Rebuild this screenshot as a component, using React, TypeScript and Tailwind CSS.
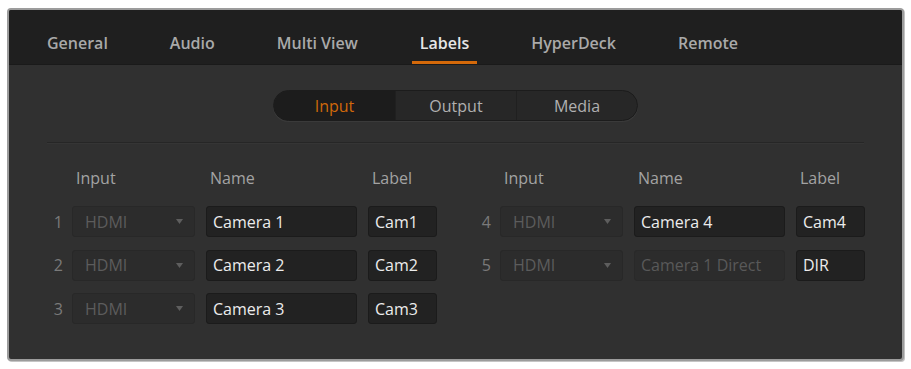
import { useState } from "react";

const tabs = ["General", "Audio", "Multi View", "Labels", "HyperDeck", "Remote"];
const segments = ["Input", "Output", "Media"];

type Row = { n: number; name: string; label: string; fixed?: boolean };

const left: Row[] = [
  { n: 1, name: "Camera 1", label: "Cam1" },
  { n: 2, name: "Camera 2", label: "Cam2" },
  { n: 3, name: "Camera 3", label: "Cam3" },
];

const right: Row[] = [
  { n: 4, name: "Camera 4", label: "Cam4" },
  { n: 5, name: "Camera 1 Direct", label: "DIR", fixed: true },
];

function Caret() {
  return (
    <svg width="7" height="5" viewBox="0 0 7 5" aria-hidden>
      <path d="M0 0h7L3.5 5z" fill="#5e5e5e" />
    </svg>
  );
}

function InputRow({ row }: { row: Row }) {
  return (
    <div className="flex h-[31px] items-center">
      <span className="w-[15px] text-right text-[16px] text-[#7a7a7a]">{row.n}</span>
      <div className="ml-[9px] flex h-full w-[123px] items-center justify-between rounded-[3px] border border-[#282828] bg-[#2c2c2c] pl-[12px] pr-[11px]">
        <span className="text-[16px] text-[#5c5c5c]">HDMI</span>
        <Caret />
      </div>
      <div
        className={`ml-[11px] flex h-full w-[151px] items-center rounded-[3px] border pl-[6px] text-[16px] ${
          row.fixed
            ? "border-[#292929] bg-[#2c2c2c] text-[#595959]"
            : "border-[#1b1b1b] bg-[#222222] text-[#ececec]"
        }`}
      >
        {row.name}
      </div>
      <div className="ml-[11px] flex h-full w-[69px] items-center rounded-[3px] border border-[#1b1b1b] bg-[#222222] pl-[6px] text-[16px] text-[#ececec]">
        {row.label}
      </div>
    </div>
  );
}

function Group({ rows }: { rows: Row[] }) {
  return (
    <div className="flex w-[389px] flex-col">
      <div className="flex h-[20px] items-center text-[16px] text-[#a3a3a3]">
        <span className="ml-[28px] w-[134px]">Input</span>
        <span className="w-[162px]">Name</span>
        <span>Label</span>
      </div>
      <div className="mt-[18px] flex flex-col gap-[12.5px]">
        {rows.map((r) => (
          <InputRow key={r.n} row={r} />
        ))}
      </div>
    </div>
  );
}

export default function App() {
  const [tab] = useState("Labels");
  const [seg] = useState("Input");

  return (
    <div className="min-h-screen bg-white pl-[7px] pt-[8px] font-['Open_Sans',sans-serif]">
      <div className="h-[353px] w-[897px] overflow-hidden rounded-[4px] border-2 border-[#9c9c9c] bg-[#303030] shadow-[1px_1px_0_#c4c4c4]">
        {/* top tab strip */}
        <div className="flex h-[55px] items-stretch gap-[46px] border-b border-[#1a1a1a] bg-[#1f1f1f] pl-[30px]">
          {tabs.map((t) => (
            <div
              key={t}
              className={`flex items-center border-b-[3px] px-[8px] pt-[15px] text-[16px] font-semibold ${
                t === tab
                  ? "border-[#d4690a] text-[#e6e6e6]"
                  : "border-transparent text-[#a9a9a9]"
              }`}
            >
              {t}
            </div>
          ))}
        </div>

        <div className="flex justify-center pt-[25px]">
          <div className="flex h-[31px] overflow-hidden rounded-full border border-[#1c1c1c] bg-[#272727] shadow-[0_1px_0_#3a3a3a]">
            {segments.map((s, i) => (
              <div
                key={s}
                className={`flex w-[121px] items-center justify-center text-[16px] ${
                  i > 0 ? "border-l border-[#202020]" : ""
                } ${s === seg ? "bg-[#1c1c1c] text-[#d0680a]" : "text-[#b0b0b0]"}`}
              >
                {s}
              </div>
            ))}
          </div>
        </div>

        <div className="mx-[38px] mt-[21px] h-px bg-[#262626] shadow-[0_1px_0_#353535]" />

        <div className="flex gap-[39px] pl-[39px] pt-[25px]">
          <Group rows={left} />
          <Group rows={right} />
        </div>
      </div>
    </div>
  );
}
